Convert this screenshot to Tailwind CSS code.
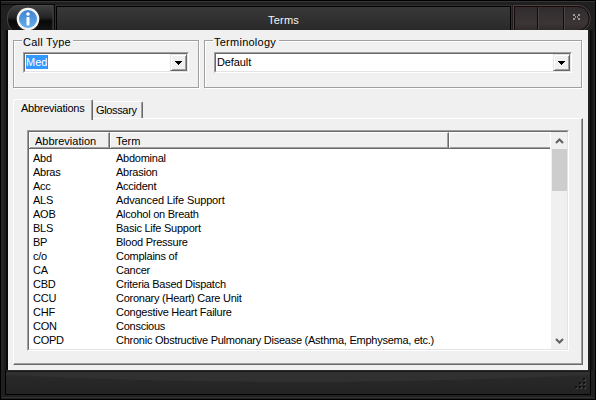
<!DOCTYPE html>
<html lang="en">
<head>
<meta charset="utf-8">
<title>Terms</title>
<script src="https://cdn.jsdelivr.net/npm/@tailwindcss/browser@4"></script>
</head>
<body class="h-[400px] w-[596px] overflow-hidden bg-black font-['Liberation_Sans',Arial,sans-serif] text-[11px] leading-[14px] tracking-[-0.25px] text-black">
<div class="flex h-[400px] w-[596px] flex-col rounded-[2px] border border-black bg-[#202020]">
  <header class="flex h-[29px] shrink-0 border-t border-[#353535] pt-[2px]">
    <svg class="h-[27px] w-[54px] shrink-0" viewBox="1 3 54 27">
      <defs>
        <linearGradient id="pill" x2="0" y2="1"><stop stop-color="#404040"/><stop offset=".45" stop-color="#252525"/><stop offset=".6" stop-color="#080808"/><stop offset="1" stop-color="#161616"/></linearGradient>
        <linearGradient id="blue" x2="0" y2="1"><stop stop-color="#3f83cf"/><stop offset="1" stop-color="#65acee"/></linearGradient>
      </defs>
      <path d="M1 3.500H55M54.500 3V30" stroke="#080808" fill="none"/>
      <path d="M53 4.500H19C11 4.500 7.500 11 7.500 17.500C7.500 24 10 28 14 30.500H53Z" fill="url(#pill)" stroke="#484848"/>
      <circle cx="28" cy="18" r="11.300" fill="#f4f4f2"/>
      <circle cx="28" cy="18" r="9" fill="url(#blue)"/>
      <circle cx="28" cy="13" r="1.800" fill="#fff"/>
      <rect x="26.500" y="16" width="3" height="8.500" rx="1" fill="#fff"/>
    </svg>
    <div class="ml-px mt-[2px] flex h-[25px] w-[455px] shrink-0 items-center justify-center border-x border-t border-black bg-linear-to-b from-[#383838] to-[#292929] pt-[1px] tracking-[0.25px] text-[#f5f5f5] ring-1 ring-[#303030]">Terms</div>
    <svg class="ml-[2px] h-[27px] w-[80px] shrink-0" viewBox="513 3 80 27">
      <defs><linearGradient id="ctl" x2="0" y2="1"><stop stop-color="#302c2d"/><stop offset=".7" stop-color="#3b3536"/><stop offset="1" stop-color="#302b2b"/></linearGradient></defs>
      <path d="M513.500 30V4.500H577C594.500 4.500 594.500 30.500 577 30.500" fill="none" stroke="#484444"/>
      <path d="M514.500 29.500V5.500H577C593 5.500 593 29.500 577 29.500Z" fill="url(#ctl)" stroke="#1b0909"/>
      <path d="M537.500 6V29M563.500 6V29" stroke="#170b0b"/><path d="M538.500 6V29M564.500 6V29" stroke="#494344"/>
      <path d="M573 13h2v2h-2zM578 13h2v2h-2zM573 17h2v2h-2zM578 17h2v2h-2zM575 15h1v2h-1zM577 15h1v2h-1z" fill="#999" shape-rendering="crispEdges"/>
    </svg>
  </header>

  <div class="flex h-[340px] shrink-0">
    <div class="w-[7px] shrink-0 border-r-2 border-[#090909] bg-linear-to-r from-[#292929] to-[#1c1c1c]"></div>
    <main class="flex w-[580px] shrink-0 flex-col bg-[#f0f0f0] px-[5px] pt-[5px]">
      <div class="flex gap-[5px]">
        <fieldset class="h-[53px] w-[186px] border-0">
          <div class="flex h-[5px] items-start"><legend class="z-10 ml-[9px] h-[14px] w-[51px] bg-[#f0f0f0] pl-[1px] tracking-[0.25px]">Call Type</legend></div>
          <div class="h-[48px] border border-[#a0a0a0] pl-[9px] pt-[11px] shadow-[1px_1px_0_#fff,inset_1px_1px_0_#fff]">
            <div class="flex h-[21px] w-[166px] border border-t-[#a0a0a0] border-r-white border-b-white border-l-[#a0a0a0]">
              <div class="flex w-full border border-t-[#696969] border-r-[#e3e3e3] border-b-[#e3e3e3] border-l-[#696969] bg-white">
                <div class="flex-1 pl-[1px] pt-[1px]"><span class="inline-block h-[14px] w-[22px] border-r border-[#c66718] bg-[#3399ff] tracking-[0] text-white">Med</span></div>
                <div class="flex w-[17px] items-center justify-center border border-t-[#e3e3e3] border-r-[#696969] border-b-[#696969] border-l-[#e3e3e3] bg-[#f0f0f0] shadow-[inset_1px_1px_#fff,inset_-1px_-1px_#a0a0a0]"><svg class="mt-[1px] h-[4px] w-[7px]" viewBox="0 0 7 4" shape-rendering="crispEdges"><path d="M0 0h7v1H6v1H5v1H4v1H3V3H2V2H1V1H0z"/></svg></div>
              </div>
            </div>
          </div>
        </fieldset>
        <fieldset class="h-[53px] w-[378px] border-0">
          <div class="flex h-[5px] items-start"><legend class="z-10 ml-[9px] h-[14px] w-[66px] bg-[#f0f0f0] pl-[1px] tracking-[0.25px]">Terminology</legend></div>
          <div class="h-[48px] border border-[#a0a0a0] pl-[9px] pt-[11px] shadow-[1px_1px_0_#fff,inset_1px_1px_0_#fff]">
            <div class="flex h-[21px] w-[358px] border border-t-[#a0a0a0] border-r-white border-b-white border-l-[#a0a0a0]">
              <div class="flex w-full border border-t-[#696969] border-r-[#e3e3e3] border-b-[#e3e3e3] border-l-[#696969] bg-white">
                <div class="flex-1 pl-[1px] pt-[1px] tracking-[-0.1px]">Default</div>
                <div class="flex w-[17px] items-center justify-center border border-t-[#e3e3e3] border-r-[#696969] border-b-[#696969] border-l-[#e3e3e3] bg-[#f0f0f0] shadow-[inset_1px_1px_#fff,inset_-1px_-1px_#a0a0a0]"><svg class="mt-[1px] h-[4px] w-[7px]" viewBox="0 0 7 4" shape-rendering="crispEdges"><path d="M0 0h7v1H6v1H5v1H4v1H3V3H2V2H1V1H0z"/></svg></div>
              </div>
            </div>
          </div>
        </fieldset>
      </div>

      <div class="mt-[11px] flex h-[19px] items-end">
        <div class="z-10 -mb-[2px] h-[21px] w-[80px] rounded-t-[2px] border-t border-r border-l border-t-white border-r-[#696969] border-l-white bg-[#f0f0f0] pl-[7px] pt-[1px] shadow-[inset_-1px_0_#a0a0a0]">Abbreviations</div>
        <div class="h-[17px] w-[50px] rounded-t-[2px] border-t border-r border-t-white border-r-[#696969] pl-[3px] pt-[1px] tracking-[-0.35px] shadow-[inset_-1px_0_#a0a0a0]">Glossary</div>
      </div>
      <div class="h-[247px] w-[570px] border border-t-white border-r-[#696969] border-b-[#696969] border-l-white pl-[13px] pt-[11px] shadow-[inset_-1px_-1px_#a0a0a0]">
        <div class="h-[221px] w-[542px] border border-t-[#a0a0a0] border-r-white border-b-white border-l-[#a0a0a0]">
          <div class="flex h-full border border-t-[#696969] border-r-[#e3e3e3] border-b-[#e3e3e3] border-l-[#696969] bg-white">
            <div class="w-[522px]">
              <div class="flex h-[17px] w-[521px] border-b border-[#696969] bg-[#f0f0f0] tracking-[0]">
                <div class="w-[81px] border-t border-r border-l border-t-white border-r-[#696969] border-l-white pl-[5px] pt-[1px] shadow-[inset_-1px_-1px_#a0a0a0]">Abbreviation</div>
                <div class="w-[339px] border-t border-r border-l border-t-white border-r-[#696969] border-l-white pl-[5px] pt-[1px] shadow-[inset_-1px_-1px_#a0a0a0]">Term</div>
                <div class="flex-1 border-t border-l border-white shadow-[inset_0_-1px_#a0a0a0]"></div>
              </div>
              <div class="grid auto-rows-[14px] grid-cols-[83px_1fr] whitespace-nowrap pl-[4px] pt-[2px]">
                <span>Abd</span><span>Abdominal</span>
                <span>Abras</span><span>Abrasion</span>
                <span>Acc</span><span>Accident</span>
                <span>ALS</span><span class="tracking-[-0.13px]">Advanced Life Support</span>
                <span>AOB</span><span>Alcohol on Breath</span>
                <span>BLS</span><span>Basic Life Support</span>
                <span>BP</span><span>Blood Pressure</span>
                <span>c/o</span><span>Complains of</span>
                <span>CA</span><span>Cancer</span>
                <span>CBD</span><span>Criteria Based Dispatch</span>
                <span>CCU</span><span>Coronary (Heart) Care Unit</span>
                <span>CHF</span><span>Congestive Heart Failure</span>
                <span>CON</span><span>Conscious</span>
                <span>COPD</span><span>Chronic Obstructive Pulmonary Disease (Asthma, Emphysema, etc.)</span>
              </div>
            </div>
            <div class="flex flex-1 flex-col items-center bg-[#f0f0f0]">
              <svg class="h-[17px] w-[15px]" viewBox="0 0 15 17"><path d="M4 11L7.500 7.500L11 11" fill="none" stroke="#606060" stroke-width="2"/></svg>
              <div class="h-[42px] w-[15px] bg-[#cdcdcd]"></div>
              <svg class="mt-auto h-[17px] w-[15px]" viewBox="0 0 15 17"><path d="M4 7L7.500 10.500L11 7" fill="none" stroke="#606060" stroke-width="2"/></svg>
            </div>
          </div>
        </div>
      </div>
    </main>
    <div class="flex-1 border-l-2 border-[#202020] bg-linear-to-r from-[#080808] to-[#292929]"></div>
  </div>

  <footer class="h-[29px]">
    <svg class="h-[29px] w-[594px]" viewBox="1 370 594 29">
      <defs><linearGradient id="foot" x2="0" y2="1"><stop stop-color="#2c2c2c"/><stop offset="1" stop-color="#222"/></linearGradient></defs>
      <rect x="1" y="370" width="594" height="29" fill="#202020"/>
      <path d="M5.500 370V394.500H590.500V370" fill="url(#foot)" stroke="#000"/>
      <path d="M6 372H590V375Q300 389 6 375Z" fill="#303030"/>
      <path d="M6 371.500H590" stroke="#191919"/>
      <path d="M2 397.500H594" stroke="#343434"/>
      <g fill="#111"><path d="M583 378h2v2h-2zM579 382h2v2h-2zM583 382h2v2h-2zM575 386h2v2h-2zM579 386h2v2h-2zM583 386h2v2h-2z"/></g>
      <path d="M585 379h1v2h-2v-1h1zM581 383h1v2h-2v-1h1zM585 383h1v2h-2v-1h1zM577 387h1v2h-2v-1h1zM581 387h1v2h-2v-1h1zM585 387h1v2h-2v-1h1z" fill="#444"/>
    </svg>
  </footer>
</div>
</body>
</html>
